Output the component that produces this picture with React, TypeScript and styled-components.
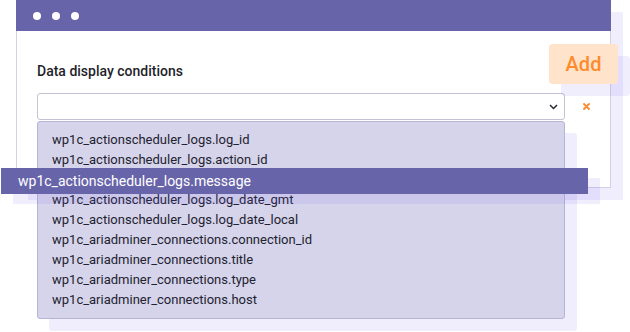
import React, { FC } from 'react';
import styled, { createGlobalStyle } from 'styled-components';

//region styled

const GlobalStyle = createGlobalStyle`
  body {
    margin: 0;
    background: #ffffff;
    font-family: Roboto, "Liberation Sans", sans-serif;
  }
`;

const Page = styled.div`
  width: 630px;
  height: 332px;
  padding-left: 16px;
  box-sizing: border-box;
  overflow: hidden;
`;

const Window = styled.div`
  position: relative;
  width: 595px;
  height: 188px;
  box-sizing: border-box;
  background: #ffffff;
  border: 1px solid #d2cfe8;
  box-shadow: 12px 12px 0 rgba(108, 92, 231, 0.1);
`;

const Header = styled.div`
  display: flex;
  align-items: center;
  gap: 11px;
  height: 31px;
  margin: -1px -1px 0;
  padding-left: 17px;
  background: #6864a9;
`;

const Dot = styled.span`
  width: 8px;
  height: 8px;
  border-radius: 50%;
  background: #ffffff;
`;

const Body = styled.div`
  padding: 31px 20px 0;
`;

const Label = styled.div`
  height: 18px;
  line-height: 18px;
  font-size: 14px;
  font-weight: 500;
  color: #1f1f2b;
  margin-bottom: 13px;
`;

const SelectRow = styled.div`
  display: flex;
  align-items: center;
  gap: 18px;
`;

const SelectBox = styled.div`
  display: flex;
  align-items: center;
  justify-content: flex-end;
  width: 528px;
  height: 27px;
  box-sizing: border-box;
  padding-right: 6px;
  border: 1px solid #c3c3d8;
  border-radius: 3px;
  background: #ffffff;
`;

const Clear = styled.span`
  display: flex;
  color: #ff8a2b;
`;

const Menu = styled.ul`
  width: 528px;
  margin: 1px 0 0;
  padding: 8px 0 8px;
  box-sizing: border-box;
  list-style: none;
  background: #d6d4ea;
  border: 1px solid #b6b3d6;
  border-radius: 3px;
  box-shadow: 12px 12px 0 rgba(108, 92, 231, 0.1);
`;

const Item = styled.li<{ $active?: boolean }>`
  height: 20px;
  line-height: 20px;
  padding-left: 14px;
  font-size: 13px;
  color: #222230;
  white-space: nowrap;

  ${({ $active }) =>
    $active &&
    `
    position: relative;
    height: 26px;
    line-height: 26px;
    margin: -2px -24px -4px -37px;
    padding-left: 17px;
    font-size: 14px;
    color: #ffffff;
    background: #6864a9;
    box-shadow: 12px 10px 0 rgba(108, 92, 231, 0.1);
  `}
`;

const AddButton = styled.button`
  position: absolute;
  top: 43px;
  left: 532px;
  width: 69px;
  height: 40px;
  border: none;
  border-radius: 4px;
  background: #ffe3cb;
  color: #ff8a2b;
  font-family: Roboto, "Liberation Sans", sans-serif;
  font-size: 20px;
  font-weight: 500;
  box-shadow: 12px 12px 0 rgba(108, 92, 231, 0.1);
`;

//endregion

const options = [
  'wp1c_actionscheduler_logs.log_id',
  'wp1c_actionscheduler_logs.action_id',
  'wp1c_actionscheduler_logs.message',
  'wp1c_actionscheduler_logs.log_date_gmt',
  'wp1c_actionscheduler_logs.log_date_local',
  'wp1c_ariadminer_connections.connection_id',
  'wp1c_ariadminer_connections.title',
  'wp1c_ariadminer_connections.type',
  'wp1c_ariadminer_connections.host',
];

const App: FC = () => {
  const active = 'wp1c_actionscheduler_logs.message';

  return (
    <Page>
      <GlobalStyle />
      <Window>
        <Header>
          <Dot />
          <Dot />
          <Dot />
        </Header>
        <Body>
          <Label>Data display conditions</Label>
          <SelectRow>
            <SelectBox>
              <svg width="9" height="6" viewBox="0 0 9 6">
                <polyline points="1,1 4.5,4.5 8,1" fill="none" stroke="#2a2a35" strokeWidth="1.5" />
              </svg>
            </SelectBox>
            <Clear>
              <svg width="7" height="7" viewBox="0 0 7 7">
                <path d="M1 1L6 6M6 1L1 6" stroke="currentColor" strokeWidth="1.8" strokeLinecap="round" />
              </svg>
            </Clear>
          </SelectRow>
          <Menu>
            {options.map((item: string) => (
              <Item key={item} $active={item === active}>
                {item}
              </Item>
            ))}
          </Menu>
        </Body>
        <AddButton>Add</AddButton>
      </Window>
    </Page>
  );
};

export default App;
